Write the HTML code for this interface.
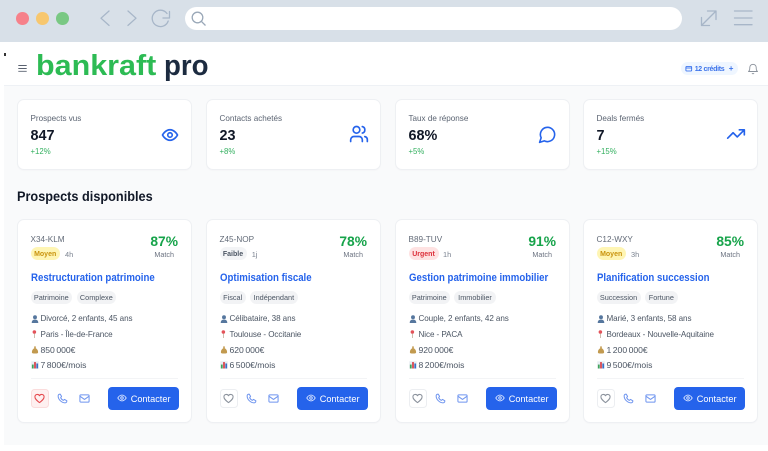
<!DOCTYPE html>
<html lang="fr"><head><meta charset="utf-8"><title>bankraft pro</title>
<style>
*{box-sizing:border-box;margin:0;padding:0}
html,body{width:768px;height:451px;overflow:hidden;background:#fff;font-family:"Liberation Sans",sans-serif}
.a{filter:blur(.3px)}
.a,.a *{position:absolute}
.t{white-space:nowrap;line-height:1}
.stat,.card{background:#fff;border:1px solid #eef0f3;border-radius:7px;box-shadow:0 1px 1px rgba(0,0,0,.02);width:175px}
.stat{top:98.5px;height:71px}
.card{top:218.5px;height:204px}
.sl{left:12.500px;top:15.500px;font-size:8.1px;color:#5b6472}
.sv{left:12.500px;top:29px;font-size:14.4px;font-weight:bold;color:#111827}
.sd{left:12.500px;top:48px;font-size:7.8px;color:#34b060}
.id{left:12.500px;top:16.600px;font-size:8.2px;color:#636b78}
.pill{left:12.500px;top:27.5px;height:13px;border-radius:7px;font-size:7px;line-height:15px;text-align:center;font-weight:bold}
.time{top:31.7px;font-size:7.4px;color:#7b8390}
.pct{top:15.500px;font-size:13.8px;font-weight:bold;color:#16a34a;right:13px}
.mt{top:31.400px;font-size:7.2px;color:#6b7280;right:17px}
.ti{left:12.500px;top:53.200px;font-size:10.9px;font-weight:bold;color:#2563eb;transform:scaleX(.885);transform-origin:0 0}
.tag{top:71.2px;height:13.4px;border-radius:7px;background:#f2f3f5;color:#4b5563;font-size:7.3px;line-height:13.4px;text-align:center}
.r{left:22.500px;font-size:8.1px;letter-spacing:-.08px;color:#4b5563}
.n{left:22.500px;font-size:8.6px;word-spacing:-.9px;color:#4b5563}
.ic{left:12.500px;width:8px;height:8px}
.hr{left:12.500px;right:13px;top:158.8px;height:1px;background:#f3f4f6}
.hb{left:12.500px;top:169.8px;width:18.8px;height:18.8px;border-radius:3.5px;border:1px solid #eceef1;background:#fff}
.btn{left:90.3px;top:167.8px;width:70.7px;height:22.4px;border-radius:4px;background:#2563eb}
.btn span{left:22.4px;top:7.400px;font-size:9.2px;color:#fff;white-space:nowrap;line-height:1}
.ph{left:38.7px;top:173.5px;width:11px;height:11px;fill:none;stroke:#6f95ef}
.ml{left:60.5px;top:173.5px;width:11px;height:11px;fill:none;stroke:#6f95ef}
.he{left:16.2px;top:173.7px;width:11px;height:11px;fill:none;stroke:#8b929c}
.ey{left:8.3px;top:6px;width:10px;height:10px;fill:none;stroke:#dbe6ff}
</style></head><body>
<svg style="position:absolute;width:0;height:0" aria-hidden="true"><defs>
<symbol id="eye" viewBox="0 0 24 24"><path stroke-width="2.200" d="M2 12s3.600-7 10-7 10 7 10 7-3.600 7-10 7-10-7-10-7z"/><circle stroke-width="2.200" cx="12" cy="12" r="3"/></symbol>
<symbol id="heart" viewBox="0 0 24 24"><path stroke-width="2.300" stroke-linejoin="round" d="M12 21C5 15.500 2 12.500 2 8.500A5.300 5.300 0 0 1 12 6a5.300 5.300 0 0 1 10 2.500c0 4-3 7-10 12.500z"/></symbol>
<symbol id="phone" viewBox="0 0 24 24"><path stroke-width="2.200" stroke-linejoin="round" d="M7 2.500l3 5-2 2.500c1 2.800 3.200 5 6 6l2.500-2 5 3c0 3-1.500 4.500-4 4.500C10 21.500 2.500 14 2.500 6.500c0-2.500 1.500-4 4.500-4z"/></symbol>
<symbol id="mail" viewBox="0 0 24 24"><rect stroke-width="2.200" x="2" y="4" width="20" height="16" rx="2"/><path stroke-width="2.200" stroke-linejoin="round" d="M2 7l10 7 10-7"/></symbol>
<symbol id="person" viewBox="0 0 9 9"><circle fill="#56779e" cx="4.500" cy="2.500" r="2.200"/><path fill="#56779e" d="M.8 9c0-3 1.500-3.800 3.700-3.800S8.200 6 8.200 9z"/></symbol>
<symbol id="pin" viewBox="0 0 9 9"><circle cx="3.800" cy="2.300" r="2" fill="#e4525a"/><path d="M3.800 4v5" stroke="#b9a48f" stroke-width=".8"/></symbol>
<symbol id="bag" viewBox="0 0 9 9"><path fill="#c29a4f" d="M3.300 .6h2.400l-.5 1.800c1.700.8 2.800 2.600 2.800 4.600 0 1-.8 1.500-3.500 1.500S1 8 1 7c0-2 1.100-3.800 2.800-4.600z"/></symbol>
<symbol id="chart" viewBox="0 0 9 9"><rect x=".3" y=".3" width="8.400" height="8.400" fill="#e8edf2"/><rect x="1" y="4" width="2" height="4.400" fill="#3fa35b"/><rect x="3.500" y="1.200" width="2" height="7.200" fill="#d9454d"/><rect x="6" y="2.800" width="2" height="5.600" fill="#3b6fc4"/></symbol>
</defs></svg>
<div class="a" style="left:0;top:0;width:768px;height:451px">

<!-- browser chrome -->
<div style="left:0;top:0;width:768px;height:41.800px;background:#d8e0e8"></div>
<div style="left:16.300px;top:12px;width:12.700px;height:12.700px;border-radius:50%;background:#f6818a"></div>
<div style="left:36px;top:12px;width:12.700px;height:12.700px;border-radius:50%;background:#f7c76e"></div>
<div style="left:56px;top:12px;width:12.700px;height:12.700px;border-radius:50%;background:#79c883"></div>
<svg style="left:0;top:0" width="768" height="42" fill="none" stroke="#a7b6c8" stroke-width="1.300" stroke-linecap="round" stroke-linejoin="round">
<path d="M109 11l-8 7.200 8 7.200M128 11l8 7.200-8 7.200"/>
<path d="M167 13.500a8.200 8.200 0 1 0 1.200 7.500M169.500 11.500v6.500h-6.500"/>
<path d="M701.500 25.500L716 11M707.500 11H716v8.500M701.500 17.500v8H709.500"/>
<path d="M734.500 11h17.500M734.500 18h17.500M734.500 24.700h17.500"/>
</svg>
<div style="left:185px;top:6.700px;width:496.700px;height:23.300px;border-radius:12px;background:#fff"></div>
<svg style="left:190px;top:10px" width="18" height="18" fill="none" stroke="#9aa8b8" stroke-width="1.300"><circle cx="7.500" cy="7.500" r="5.300"/><path d="M11.300 11.300l4.200 4.200"/></svg>

<!-- page -->
<div style="left:4px;top:85px;width:764px;height:360px;background:#f9fafb"></div>
<div style="left:4px;top:84.500px;width:764px;height:1px;background:#eef1f5"></div>
<div style="left:4px;top:53px;width:1.600px;height:2.500px;background:#333"></div>
<svg style="left:18px;top:64px" width="10" height="9" stroke="#5a6270" stroke-width=".9"><path d="M.3 1.500h8.400M.3 4.500h8.400M.3 7.300h8.400"/></svg>
<div class="t" style="left:35.500px;top:51.500px;font-size:28.500px;font-weight:bold;color:#2dbb54;transform:scaleX(1.070);transform-origin:0 0">bankraft</div>
<div class="t" style="left:163.500px;top:51.500px;font-size:28.500px;font-weight:bold;color:#1c2b40;transform:scaleX(.97);transform-origin:0 0">pro</div>

<div style="left:681.300px;top:62px;width:57px;height:13px;border-radius:7px;background:#eff6ff"></div>
<svg style="left:685px;top:65px" width="8" height="8" fill="none" stroke="#2563eb" stroke-width=".8"><rect x=".9" y="1.500" width="5.800" height="4.500" rx=".6"/><path d="M.9 3h5.800"/></svg>
<div class="t" style="left:694.700px;top:65.900px;font-size:7px;letter-spacing:-.3px;font-weight:bold;color:#3b72ea">12 crédits</div>
<div class="t" style="left:728.800px;top:64.800px;font-size:8px;font-weight:bold;color:#3b72ea">+</div>
<svg style="left:747px;top:62px" width="12" height="13" fill="none" stroke="#8b929c" stroke-width=".9" stroke-linejoin="round"><path d="M1.500 9.500c1-1 1.300-1.500 1.300-4a3.200 3.200 0 0 1 6.400 0c0 2.500.3 3 1.300 4zM5 11.200a1.100 1.100 0 0 0 2 0"/></svg>

<!-- stats -->
<div class="stat" style="left:17px"><div class="t sl">Prospects vus</div><div class="t sv">847</div><div class="t sd">+12%</div>
<svg style="left:143px;top:26.100px;fill:none;stroke:#2563eb" width="18" height="18"><use href="#eye"/></svg></div>
<div class="stat" style="left:206px"><div class="t sl">Contacts achetés</div><div class="t sv">23</div><div class="t sd">+8%</div>
<svg style="left:141.500px;top:24.700px" width="20" height="20" viewBox="0 0 24 24" fill="none" stroke="#2563eb" stroke-width="2" stroke-linecap="round"><path d="M16 21v-2a4 4 0 0 0-4-4H6a4 4 0 0 0-4 4v2"/><circle cx="9" cy="7" r="4"/><path d="M22 21v-2a4 4 0 0 0-3-3.870M16 3.130a4 4 0 0 1 0 7.750"/></svg></div>
<div class="stat" style="left:395px"><div class="t sl">Taux de réponse</div><div class="t sv">68%</div><div class="t sd">+5%</div>
<svg style="left:141.500px;top:25.600px" width="19" height="19" viewBox="0 0 24 24" fill="none" stroke="#2563eb" stroke-width="2" stroke-linecap="round" stroke-linejoin="round"><path d="M7.900 20A9 9 0 1 0 4 16.100L2 22z"/></svg></div>
<div class="stat" style="left:583px"><div class="t sl">Deals fermés</div><div class="t sv">7</div><div class="t sd">+15%</div>
<svg style="left:142.200px;top:24.900px" width="20" height="20" viewBox="0 0 24 24" fill="none" stroke="#2563eb" stroke-width="2" stroke-linecap="round" stroke-linejoin="round"><path d="M22 7l-8.500 8.500-5-5L2 17M16 7h6v6"/></svg></div>

<div class="t" style="left:17px;top:189.900px;font-size:13.500px;font-weight:bold;color:#111827;transform:scaleX(.942);transform-origin:0 0">Prospects disponibles</div>

<!-- card 1 -->
<div class="card" style="left:17px">
<div class="t id">X34-KLM</div><div class="pill" style="width:29.300px;background:#fef5b4;color:#c9930e">Moyen</div><div class="t time" style="left:47px">4h</div>
<div class="t pct">87%</div><div class="t mt">Match</div>
<div class="t ti">Restructuration patrimoine</div>
<div class="tag" style="left:12.500px;width:41.600px">Patrimoine</div><div class="tag" style="left:58.700px;width:39.300px">Complexe</div>
<svg class="ic" style="top:95.100px"><use href="#person"/></svg><div class="t r" style="top:95.900px">Divorcé, 2 enfants, 45 ans</div>
<svg class="ic" style="top:110.900px"><use href="#pin"/></svg><div class="t r" style="top:111.300px">Paris - Île-de-France</div>
<svg class="ic" style="top:126.100px"><use href="#bag"/></svg><div class="t n" style="top:126px">850 000€</div>
<svg class="ic" style="top:141.500px"><use href="#chart"/></svg><div class="t n" style="top:141.300px">7 800€/mois</div>
<div class="hr"></div>
<div class="hb" style="background:#fef0f0;border-color:#fbdcdc"></div>
<svg class="he" style="stroke:#e5484d"><use href="#heart"/></svg>
<svg class="ph"><use href="#phone"/></svg>
<svg class="ml"><use href="#mail"/></svg>
<div class="btn"><svg class="ey"><use href="#eye"/></svg><span>Contacter</span></div>
</div>

<!-- card 2 -->
<div class="card" style="left:206px">
<div class="t id">Z45-NOP</div><div class="pill" style="width:27px;background:#f3f4f6;color:#4b5563">Faible</div><div class="t time" style="left:44.700px">1j</div>
<div class="t pct">78%</div><div class="t mt">Match</div>
<div class="t ti">Optimisation fiscale</div>
<div class="tag" style="left:12.500px;width:26.400px">Fiscal</div><div class="tag" style="left:43px;width:47.700px">Indépendant</div>
<svg class="ic" style="top:95.100px"><use href="#person"/></svg><div class="t r" style="top:95.900px">Célibataire, 38 ans</div>
<svg class="ic" style="top:110.900px"><use href="#pin"/></svg><div class="t r" style="top:111.300px">Toulouse - Occitanie</div>
<svg class="ic" style="top:126.100px"><use href="#bag"/></svg><div class="t n" style="top:126px">620 000€</div>
<svg class="ic" style="top:141.500px"><use href="#chart"/></svg><div class="t n" style="top:141.300px">6 500€/mois</div>
<div class="hr"></div>
<div class="hb"></div>
<svg class="he"><use href="#heart"/></svg>
<svg class="ph"><use href="#phone"/></svg>
<svg class="ml"><use href="#mail"/></svg>
<div class="btn"><svg class="ey"><use href="#eye"/></svg><span>Contacter</span></div>
</div>

<!-- card 3 -->
<div class="card" style="left:395px">
<div class="t id">B89-TUV</div><div class="pill" style="width:30px;background:#fee2e2;color:#dc2f3a">Urgent</div><div class="t time" style="left:47px">1h</div>
<div class="t pct">91%</div><div class="t mt">Match</div>
<div class="t ti">Gestion patrimoine immobilier</div>
<div class="tag" style="left:12.500px;width:41.600px">Patrimoine</div><div class="tag" style="left:58px;width:42px">Immobilier</div>
<svg class="ic" style="top:95.100px"><use href="#person"/></svg><div class="t r" style="top:95.900px">Couple, 2 enfants, 42 ans</div>
<svg class="ic" style="top:110.900px"><use href="#pin"/></svg><div class="t r" style="top:111.300px">Nice - PACA</div>
<svg class="ic" style="top:126.100px"><use href="#bag"/></svg><div class="t n" style="top:126px">920 000€</div>
<svg class="ic" style="top:141.500px"><use href="#chart"/></svg><div class="t n" style="top:141.300px">8 200€/mois</div>
<div class="hr"></div>
<div class="hb"></div>
<svg class="he"><use href="#heart"/></svg>
<svg class="ph"><use href="#phone"/></svg>
<svg class="ml"><use href="#mail"/></svg>
<div class="btn"><svg class="ey"><use href="#eye"/></svg><span>Contacter</span></div>
</div>

<!-- card 4 -->
<div class="card" style="left:583px">
<div class="t id">C12-WXY</div><div class="pill" style="width:29.300px;background:#fef5b4;color:#c9930e">Moyen</div><div class="t time" style="left:47px">3h</div>
<div class="t pct">85%</div><div class="t mt">Match</div>
<div class="t ti">Planification succession</div>
<div class="tag" style="left:12.500px;width:44px">Succession</div><div class="tag" style="left:61px;width:32.700px">Fortune</div>
<svg class="ic" style="top:95.100px"><use href="#person"/></svg><div class="t r" style="top:95.900px">Marié, 3 enfants, 58 ans</div>
<svg class="ic" style="top:110.900px"><use href="#pin"/></svg><div class="t r" style="top:111.300px">Bordeaux - Nouvelle-Aquitaine</div>
<svg class="ic" style="top:126.100px"><use href="#bag"/></svg><div class="t n" style="top:126px">1 200 000€</div>
<svg class="ic" style="top:141.500px"><use href="#chart"/></svg><div class="t n" style="top:141.300px">9 500€/mois</div>
<div class="hr"></div>
<div class="hb"></div>
<svg class="he"><use href="#heart"/></svg>
<svg class="ph"><use href="#phone"/></svg>
<svg class="ml"><use href="#mail"/></svg>
<div class="btn"><svg class="ey"><use href="#eye"/></svg><span>Contacter</span></div>
</div>

</div>
</body></html>
